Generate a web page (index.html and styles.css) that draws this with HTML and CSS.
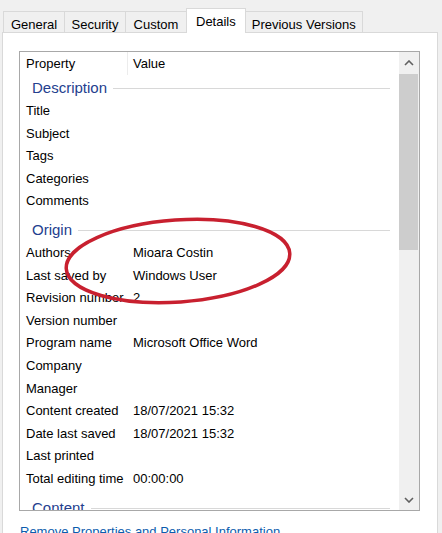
FILE: index.html
```html
<!DOCTYPE html>
<html lang="en">
<head>
<meta charset="utf-8">
<title>Properties - Details</title>
<link rel="stylesheet" href="styles.css">
</head>
<body>
<div class="dialog">
  <div class="tabs">
    <div class="tab">General</div>
    <div class="tab">Security</div>
    <div class="tab">Custom</div>
    <div class="tab selected">Details</div>
    <div class="tab">Previous Versions</div>
  </div>
  <div class="panel">
    <div class="listbox">
      <div class="list">
        <div class="header">
          <div class="cell prop">Property</div>
          <div class="cell val">Value</div>
        </div>
        <div class="group first"><span class="group-title">Description</span><span class="group-line"></span></div>
        <div class="row"><div class="cell prop">Title</div><div class="cell val"></div></div>
        <div class="row"><div class="cell prop">Subject</div><div class="cell val"></div></div>
        <div class="row"><div class="cell prop">Tags</div><div class="cell val"></div></div>
        <div class="row"><div class="cell prop">Categories</div><div class="cell val"></div></div>
        <div class="row"><div class="cell prop">Comments</div><div class="cell val"></div></div>
        <div class="group"><span class="group-title">Origin</span><span class="group-line"></span></div>
        <div class="row"><div class="cell prop">Authors</div><div class="cell val">Mioara Costin</div></div>
        <div class="row"><div class="cell prop">Last saved by</div><div class="cell val">Windows User</div></div>
        <div class="row"><div class="cell prop">Revision number</div><div class="cell val">2</div></div>
        <div class="row"><div class="cell prop">Version number</div><div class="cell val"></div></div>
        <div class="row"><div class="cell prop">Program name</div><div class="cell val">Microsoft Office Word</div></div>
        <div class="row"><div class="cell prop">Company</div><div class="cell val"></div></div>
        <div class="row"><div class="cell prop">Manager</div><div class="cell val"></div></div>
        <div class="row"><div class="cell prop">Content created</div><div class="cell val">18/07/2021 15:32</div></div>
        <div class="row"><div class="cell prop">Date last saved</div><div class="cell val">18/07/2021 15:32</div></div>
        <div class="row"><div class="cell prop">Last printed</div><div class="cell val"></div></div>
        <div class="row"><div class="cell prop">Total editing time</div><div class="cell val">00:00:00</div></div>
        <div class="group"><span class="group-title">Content</span><span class="group-line"></span></div>
      </div>
      <div class="scrollbar">
        <div class="sb-btn">
          <svg width="10" height="6" viewBox="0 0 10 6"><path d="M1 5 L5 1 L9 5" fill="none" stroke="#606060" stroke-width="1.6"/></svg>
        </div>
        <div class="sb-track"><div class="sb-thumb"></div></div>
        <div class="sb-btn">
          <svg width="10" height="6" viewBox="0 0 10 6"><path d="M1 1 L5 5 L9 1" fill="none" stroke="#606060" stroke-width="1.6"/></svg>
        </div>
      </div>
    </div>
    <a class="link" href="#">Remove Properties and Personal Information</a>
  </div>
  <svg class="annotation" width="442" height="533" viewBox="0 0 442 533">
    <ellipse cx="178" cy="261" rx="112" ry="41" transform="rotate(-4 178 261)" fill="none" stroke="#c8202f" stroke-width="3.5"/>
  </svg>
</div>
</body>
</html>
```

FILE: styles.css
```css
html, body {
  margin: 0;
  padding: 0;
}
body {
  background: #f0f0f0;
  font-family: "Liberation Sans", Arial, sans-serif;
  font-size: 13px;
  color: #000;
  width: 442px;
  height: 533px;
  overflow: hidden;
}
.dialog {
  position: relative;
  width: 442px;
  height: 533px;
}
.tabs {
  display: flex;
  align-items: flex-end;
  height: 32px;
  padding-left: 3px;
  position: relative;
  z-index: 1;
}
.tab {
  box-sizing: border-box;
  height: 21px;
  padding: 4px 6px 0;
  line-height: 17px;
  min-width: 62px;
  text-align: center;
  border: 1px solid #d9d9d9;
  border-bottom: none;
  margin-right: -1px;
  background: #f0f0f0;
  color: #000;
  white-space: nowrap;
}
.tab.selected {
  background: #fff;
  height: 25px;
  min-width: 0;
  margin-bottom: -1px;
  padding: 4px 9px 0;
}
.panel {
  margin: 0 4px 0 2px;
  border: 1px solid #d9d9d9;
  background: #fff;
  padding: 18px 0 0 16px;
  height: 520px;
  box-sizing: border-box;
}
.listbox {
  display: flex;
  width: 401px;
  height: 460px;
  box-sizing: border-box;
  border: 1px solid #a8a8a8;
  background: #fff;
  overflow: hidden;
}
.list {
  flex: 1;
  min-width: 0;
  overflow: hidden;
}
.header, .row {
  display: flex;
}
.header {
  height: 23px;
  line-height: 23px;
}
.row {
  height: 22.6px;
  line-height: 22.6px;
}
.cell.prop {
  width: 102px;
  padding-left: 6px;
  white-space: nowrap;
}
.cell.val {
  flex: 1;
  padding-left: 5px;
  white-space: nowrap;
}
.header .cell.prop {
  border-right: 1px solid #ececec;
  width: 101px;
}
.group {
  display: flex;
  align-items: center;
  height: 25px;
  margin-top: 4px;
  padding-left: 12px;
  padding-right: 9px;
}
.group.first {
  margin-top: 0;
}
.group-title {
  font-size: 15px;
  color: #24408e;
  line-height: 25px;
  white-space: nowrap;
}
.group-line {
  flex: 1;
  height: 1px;
  background: #d8d8d8;
  margin-left: 6px;
  margin-top: 2px;
}
.scrollbar {
  width: 20px;
  display: flex;
  flex-direction: column;
  background: #f0f0f0;
}
.sb-btn {
  height: 21px;
  display: flex;
  align-items: center;
  justify-content: center;
}
.sb-track {
  flex: 1;
  display: flex;
  flex-direction: column;
}
.sb-thumb {
  height: 176px;
  margin: 1px 1px 0 0;
  background: #cdcdcd;
}
.link {
  display: block;
  margin-top: 13px;
  margin-left: 1px;
  color: #0b5cad;
  text-decoration: none;
  font-size: 13px;
  line-height: 15px;
  white-space: nowrap;
}
.annotation {
  position: absolute;
  left: 0;
  top: 0;
  pointer-events: none;
  z-index: 2;
}
```
